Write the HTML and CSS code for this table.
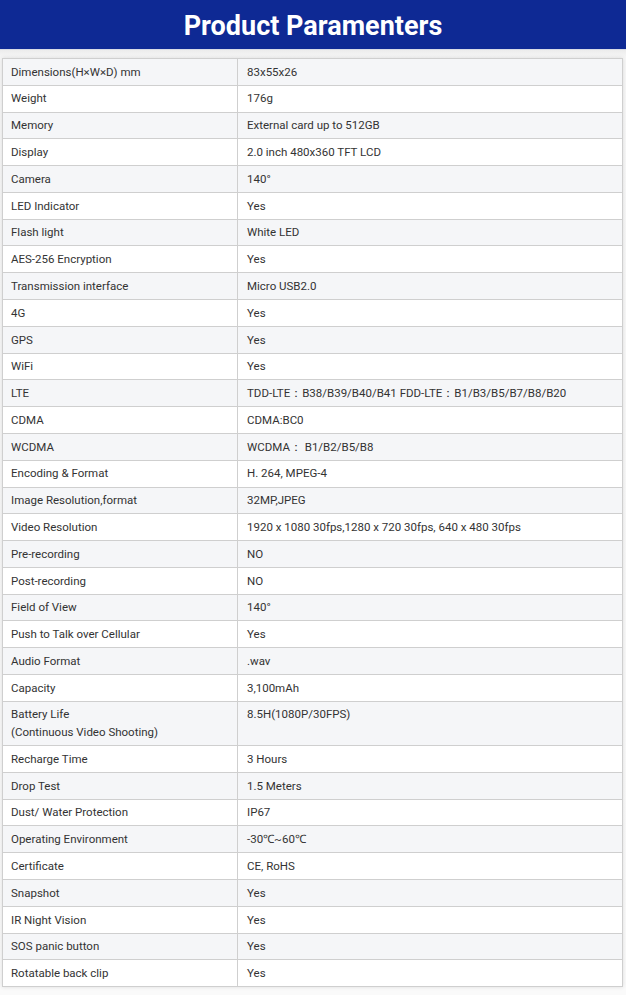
FILE: index.html
```html
<!DOCTYPE html>
<html>
<head>
<meta charset="utf-8">
<title>Product Paramenters</title>
<link rel="stylesheet" href="styles.css">
</head>
<body>
<header class="banner"><h1 class="banner-title">Product Paramenters</h1></header>
<section class="specs">
<table class="spec-table">
<tbody>
<tr><td>Dimensions(H×W×D) mm</td><td>83x55x26</td></tr>
<tr><td>Weight</td><td>176g</td></tr>
<tr><td>Memory</td><td>External card up to 512GB</td></tr>
<tr><td>Display</td><td>2.0 inch 480x360 TFT LCD</td></tr>
<tr><td>Camera</td><td>140°</td></tr>
<tr><td>LED Indicator</td><td>Yes</td></tr>
<tr><td>Flash light</td><td>White LED</td></tr>
<tr><td>AES-256 Encryption</td><td>Yes</td></tr>
<tr><td>Transmission interface</td><td>Micro USB2.0</td></tr>
<tr><td>4G</td><td>Yes</td></tr>
<tr><td>GPS</td><td>Yes</td></tr>
<tr><td>WiFi</td><td>Yes</td></tr>
<tr><td>LTE</td><td>TDD-LTE：B38/B39/B40/B41 FDD-LTE：B1/B3/B5/B7/B8/B20</td></tr>
<tr><td>CDMA</td><td>CDMA:BC0</td></tr>
<tr><td>WCDMA</td><td>WCDMA： B1/B2/B5/B8</td></tr>
<tr><td>Encoding &amp; Format</td><td>H. 264, MPEG-4</td></tr>
<tr><td>Image Resolution,format</td><td>32MP,JPEG</td></tr>
<tr><td>Video Resolution</td><td>1920 x 1080 30fps,1280 x 720 30fps, 640 x 480 30fps</td></tr>
<tr><td>Pre-recording</td><td>NO</td></tr>
<tr><td>Post-recording</td><td>NO</td></tr>
<tr><td>Field of View</td><td>140°</td></tr>
<tr><td>Push to Talk over Cellular</td><td>Yes</td></tr>
<tr><td>Audio Format</td><td>.wav</td></tr>
<tr><td>Capacity</td><td>3,100mAh</td></tr>
<tr><td>Battery Life<br>(Continuous Video Shooting)</td><td>8.5H(1080P/30FPS)</td></tr>
<tr><td>Recharge Time</td><td>3 Hours</td></tr>
<tr><td>Drop Test</td><td>1.5 Meters</td></tr>
<tr><td>Dust/ Water Protection</td><td>IP67</td></tr>
<tr><td>Operating Environment</td><td>-30℃~60℃</td></tr>
<tr><td>Certificate</td><td>CE, RoHS</td></tr>
<tr><td>Snapshot</td><td>Yes</td></tr>
<tr><td>IR Night Vision</td><td>Yes</td></tr>
<tr><td>SOS panic button</td><td>Yes</td></tr>
<tr><td>Rotatable back clip</td><td>Yes</td></tr>
</tbody>
</table>
</section>
</body>
</html>
```

FILE: styles.css
```css
html, body {
  margin: 0;
  padding: 0;
  background: #ffffff;
}
body {
  font-family: Roboto, "Liberation Sans", Arial, sans-serif;
  color: #333333;
}
.banner {
  background: #0e2994;
  height: 49px;
  display: flex;
  align-items: center;
  justify-content: center;
  border-bottom: 1px solid #d8dbe6;
}
.banner-title {
  margin: 0;
  color: #ffffff;
  font-size: 27px;
  font-weight: 700;
  line-height: 1;
  padding-top: 4px;
}
.specs {
  background: linear-gradient(#ececec 0px, #f7f7f7 8px, #fafafa 100%);
  padding: 8px 3px 8px 2px;
}
.spec-table {
  width: 100%;
  border-collapse: collapse;
  font-size: 11.5px;
  line-height: 17.6px;
  box-shadow: 0 0 4px rgba(0, 0, 0, 0.12);
}
.spec-table td {
  border: 1px solid #cfcfcf;
  padding: 4.7px 8px 3.5px 8px;
  vertical-align: top;
  text-align: left;
}
.spec-table td:first-child {
  width: 218px;
}
.spec-table td:last-child {
  padding-left: 9px;
}
.spec-table tr:nth-child(odd) td {
  background: #f5f6f8;
}
.spec-table tr:nth-child(even) td {
  background: #ffffff;
}
```
